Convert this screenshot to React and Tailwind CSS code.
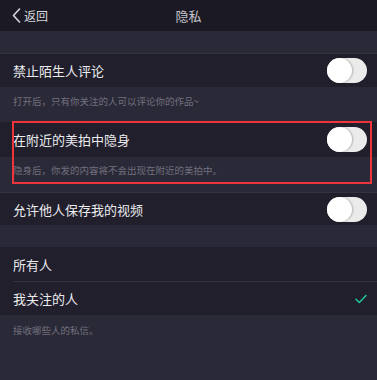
import React from "react";

const font = { fontFamily: '"Noto Sans CJK SC", "Noto Sans", sans-serif' };

const Toggle = () => (
  <div className="w-[40px] h-[25px] rounded-full bg-[#ebebeb] flex items-center">
    <div className="w-[25px] h-[25px] rounded-full bg-white shadow-[1px_0_2px_rgba(0,0,0,0.25)]" />
  </div>
);

const Row = ({ title, h, children }) => (
  <div className={`${h} bg-[#201f2b] flex items-center justify-between pl-[13px] pr-[10px]`}>
    <span className="text-[13px] text-[#ebebee] leading-none">{title}</span>
    {children}
  </div>
);

const Caption = ({ text, h, pt }) => (
  <div className={`${h} ${pt} bg-[#2a2937] pl-[13px]`}>
    <p className="text-[9.5px] text-[#72707e] leading-none">{text}</p>
  </div>
);

export default function App() {
  return (
    <div className="w-[377px] h-[380px] bg-[#2a2937] overflow-hidden" style={font}>
      <div className="h-[31px] bg-[#1b1a24] relative flex items-center justify-center">
        <div className="absolute left-[12px] top-0 h-full flex items-center gap-[3px]">
          <svg width="9" height="15" viewBox="0 0 9 15" fill="none">
            <path d="M7.5 1L1.5 7.5L7.5 14" stroke="#d8d8dc" strokeWidth="1.6" strokeLinecap="round" strokeLinejoin="round" />
          </svg>
          <span className="text-[12px] text-[#d8d8dc] leading-none">返回</span>
        </div>
        <span className="text-[13px] text-[#c4c4ca] leading-none">隐私</span>
      </div>
      <div className="h-[22px]" />
      <div className="h-px bg-[#34333f]" />
      <Row title="禁止陌生人评论" h="h-[33px]">
        <Toggle />
      </Row>
      <Caption text="打开后，只有你关注的人可以评论你的作品~" h="h-[35px]" pt="pt-[10px]" />
      <div className="relative">
        <Row title="在附近的美拍中隐身" h="h-[35px]">
          <Toggle />
        </Row>
        <Caption text="隐身后，你发的内容将不会出现在附近的美拍中。" h="h-[35px]" pt="pt-[9px]" />
        <div className="absolute left-[12px] right-[5px] top-[-1px] h-[63px] border-2 border-[#f0343c] pointer-events-none" />
      </div>
      <div className="h-px bg-[#34333f]" />
      <Row title="允许他人保存我的视频" h="h-[32px]">
        <Toggle />
      </Row>
      <div className="h-[22px]" />
      <div className="bg-[#201f2b]">
        <div className="h-[34px] flex items-center pl-[13px]">
          <span className="text-[13px] text-[#ebebee] leading-none">所有人</span>
        </div>
        <div className="h-px bg-[#33323e] ml-[13px]" />
        <div className="h-[33px] flex items-center justify-between pl-[13px] pr-[10px]">
          <span className="text-[13px] text-[#ebebee] leading-none">我关注的人</span>
          <svg width="12" height="10" viewBox="0 0 12 10" fill="none">
            <path d="M1 5.2L4.3 8.5L11 1.5" stroke="#22c7a1" strokeWidth="1.5" strokeLinecap="round" strokeLinejoin="round" />
          </svg>
        </div>
      </div>
      <Caption text="接收哪些人的私信。" h="h-[65px]" pt="pt-[11px]" />
    </div>
  );
}
